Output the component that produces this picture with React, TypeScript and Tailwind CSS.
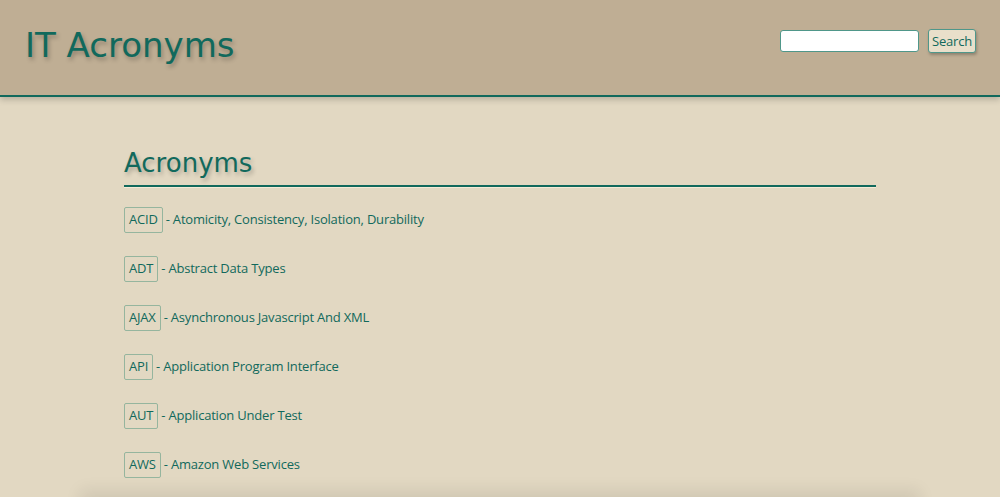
const acronyms = [
  { short: 'ACID', long: 'Atomicity, Consistency, Isolation, Durability' },
  { short: 'ADT', long: 'Abstract Data Types' },
  { short: 'AJAX', long: 'Asynchronous Javascript And XML' },
  { short: 'API', long: 'Application Program Interface' },
  { short: 'AUT', long: 'Application Under Test' },
  { short: 'AWS', long: 'Amazon Web Services' },
]

const headingFont = { fontFamily: '"DejaVu Sans", Verdana, sans-serif' }

export default function App() {
  return (
    <div
      className="min-h-[497px] bg-[#e2d8c2] text-[#11695c]"
      style={{ fontFamily: '"Open Sans", sans-serif' }}
    >
      <header className="flex h-[97px] items-start justify-between border-b-2 border-[#11695c] bg-[#bfae94] pl-[25px] pr-[24px] shadow-[0_3px_6px_rgba(0,0,0,0.18)]">
        <h1
          className="mt-[25px] text-[34px] leading-[40px] [text-shadow:2px_3px_4px_rgba(0,0,0,0.25)]"
          style={headingFont}
        >
          IT Acronyms
        </h1>
        <form className="mt-[29px] flex items-center gap-[9px]">
          <input
            type="text"
            className="h-[22px] w-[139px] rounded-[3px] border border-[#4f978a] bg-white"
          />
          <button
            type="button"
            className="h-[24px] rounded-[3px] border border-[#4f978a] bg-[#e9dfca] px-[3px] text-[13px] font-medium leading-none tracking-[-0.2px] text-[#11695c] shadow-[1px_2px_3px_rgba(0,0,0,0.25)]"
          >
            Search
          </button>
        </form>
      </header>

      <main className="mx-auto w-[752px] pt-[49px]">
        <h2
          className="pb-[5px] text-[26px] leading-[34px] [text-shadow:2px_3px_4px_rgba(0,0,0,0.25)]"
          style={headingFont}
        >
          Acronyms
        </h2>
        <div className="h-[2px] bg-[#11695c] shadow-[0_1px_0_#f5ebd6]" />
        <ul className="mt-[20px] flex flex-col gap-[23px]">
          {acronyms.map((item) => (
            <li
              key={item.short}
              className="flex items-center text-[13px] font-medium tracking-[-0.2px]"
            >
              <span className="flex h-[26px] items-center rounded-[2px] border border-[#95b59e] px-[4px]">
                {item.short}
              </span>
              <span className="ml-[3px]">- {item.long}</span>
            </li>
          ))}
        </ul>
        <div className="mx-[-44px] mt-[20px] h-[30px] shadow-[0_-8px_16px_rgba(0,0,0,0.08)]" />
      </main>
    </div>
  )
}
